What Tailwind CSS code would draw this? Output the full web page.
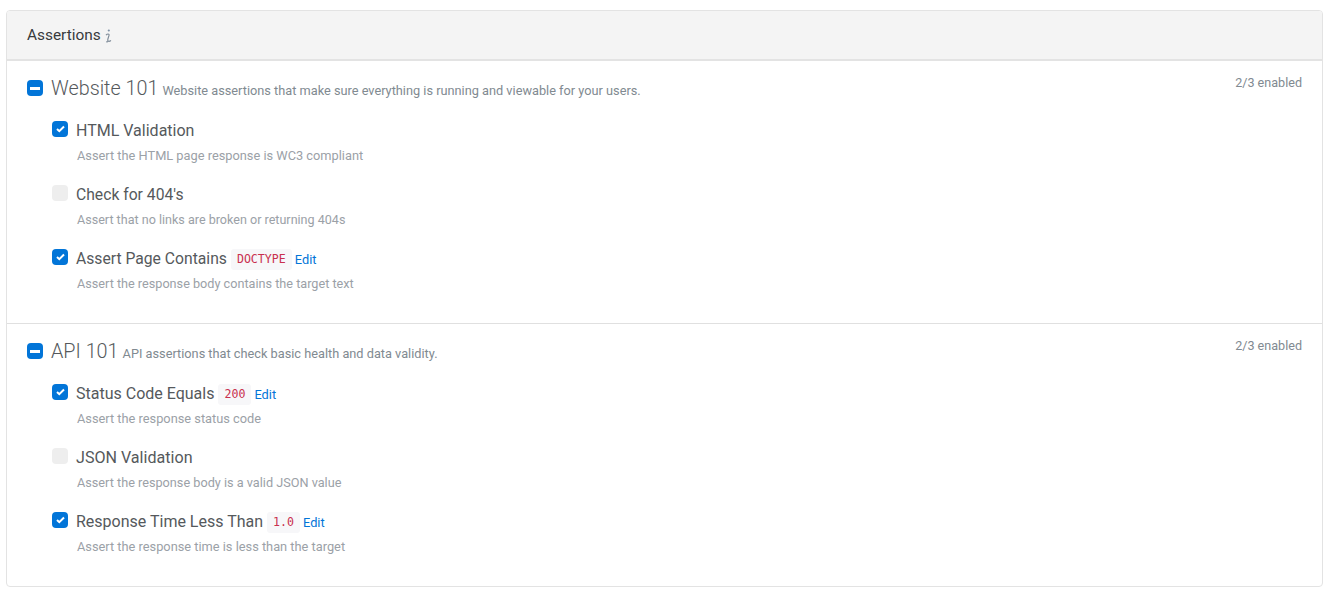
<!DOCTYPE html>
<html lang="en">
<head>
    <meta charset="UTF-8">
    <title>Assertions</title>
    <script src="https://cdn.jsdelivr.net/npm/@tailwindcss/browser@4"></script>
</head>
<body class="bg-white font-['Roboto',sans-serif] text-[#55595c]">
    <div class="pt-[10px] px-[6px] pr-[7px]">
        <div class="border border-[#e3e3e3] rounded-[4px] overflow-hidden h-[577px]">
            <!-- header -->
            <div class="h-[50px] bg-[#f4f4f4] border-b-2 border-[#e3e3e3] pl-[20px] flex items-center text-[15.4px] text-[#373a3c]">
                <span class="mt-[1px]">Assertions</span>
                <svg class="ml-[4px] mt-[1px]" width="7" height="14" viewBox="0 0 7 14"><circle cx="3.8" cy="1.5" r="1.1" fill="#7f93a8"/><path d="M1 6.2 C2.5 4.6 4.4 4.6 4 6.4 L2.8 10.4 C2.4 12.4 3.8 13 6 11.6 M1.2 12.8 L3 12.6" fill="none" stroke="#7f8c99" stroke-width="1.2"/></svg>
            </div>

            <!-- Website 101 -->
            <section class="h-[263px] border-b border-[#e0e0e0] pl-[20px] pr-[20px] relative">
                <div class="flex items-center pt-[14px] h-[40px]">
                    <span class="w-4 h-4 rounded-[4px] bg-[#0275d8] flex items-center justify-center shrink-0"><span class="w-[10px] h-[3px] bg-white"></span></span>
                    <span class="ml-[8px] mt-[1px] text-[19.8px] font-light text-[#55595c]">Website 101</span>
                    <span class="ml-[4px] mt-[5px] text-[12.75px] text-[#818a91]">Website assertions that make sure everything is running and viewable for your users.</span>
                </div>
                <div class="absolute right-[20px] top-[13px] text-[12.6px] text-[#818a91]">2/3 enabled</div>

                <div class="pl-[25px] pt-[19px]">
                    <div class="h-[64px]">
                        <div class="flex items-center h-[22px]">
                            <span class="w-4 h-4 rounded-[4px] bg-[#0275d8] flex items-center justify-center shrink-0 -mt-[4px]">
                                <svg width="9" height="8" viewBox="0 0 9 8"><path d="M1 4 L3.3 6.2 L8 1.5" fill="none" stroke="#fff" stroke-width="2"/></svg>
                            </span>
                            <span class="ml-[8px] text-[16px] leading-[22px]">HTML Validation</span>
                        </div>
                        <p class="ml-[25px] mt-[4px] text-[12.8px] leading-[19px] text-[#9ba1a7]">Assert the HTML page response is WC3 compliant</p>
                    </div>
                    <div class="h-[64px]">
                        <div class="flex items-center h-[22px]">
                            <span class="w-4 h-4 rounded-[4px] bg-[#eeeeee] shrink-0 -mt-[4px]"></span>
                            <span class="ml-[8px] text-[15.7px] leading-[22px]">Check for 404's</span>
                        </div>
                        <p class="ml-[25px] mt-[4px] text-[12.57px] leading-[19px] text-[#9ba1a7]">Assert that no links are broken or returning 404s</p>
                    </div>
                    <div class="h-[64px]">
                        <div class="flex items-center h-[22px]">
                            <span class="w-4 h-4 rounded-[4px] bg-[#0275d8] flex items-center justify-center shrink-0 -mt-[4px]">
                                <svg width="9" height="8" viewBox="0 0 9 8"><path d="M1 4 L3.3 6.2 L8 1.5" fill="none" stroke="#fff" stroke-width="2"/></svg>
                            </span>
                            <span class="ml-[8px] text-[15.7px] leading-[22px]">Assert Page Contains</span>
                            <code class="ml-[4px] mt-[1px] px-[6px] h-[21px] leading-[21px] rounded-[3px] bg-[#f7f7f9] font-['DejaVu_Sans_Mono',monospace] text-[11.6px] text-[#c9304f]">DOCTYPE</code>
                            <a href="#" class="ml-[3px] mt-[1px] text-[12.8px] text-[#0275d8]">Edit</a>
                        </div>
                        <p class="ml-[25px] mt-[4px] text-[12.66px] leading-[19px] text-[#9ba1a7]">Assert the response body contains the target text</p>
                    </div>
                </div>
            </section>

            <!-- API 101 -->
            <section class="h-[262px] pl-[20px] pr-[20px] relative">
                <div class="flex items-center pt-[14px] h-[40px]">
                    <span class="w-4 h-4 rounded-[4px] bg-[#0275d8] flex items-center justify-center shrink-0"><span class="w-[10px] h-[3px] bg-white"></span></span>
                    <span class="ml-[8px] mt-[1px] text-[19.8px] font-light text-[#55595c]">API 101</span>
                    <span class="ml-[4px] mt-[5px] text-[12.75px] text-[#818a91]">API assertions that check basic health and data validity.</span>
                </div>
                <div class="absolute right-[20px] top-[13px] text-[12.6px] text-[#818a91]">2/3 enabled</div>

                <div class="pl-[25px] pt-[19px]">
                    <div class="h-[64px]">
                        <div class="flex items-center h-[22px]">
                            <span class="w-4 h-4 rounded-[4px] bg-[#0275d8] flex items-center justify-center shrink-0 -mt-[4px]">
                                <svg width="9" height="8" viewBox="0 0 9 8"><path d="M1 4 L3.3 6.2 L8 1.5" fill="none" stroke="#fff" stroke-width="2"/></svg>
                            </span>
                            <span class="ml-[8px] text-[16px] leading-[22px]">Status Code Equals</span>
                            <code class="ml-[4px] mt-[1px] px-[6px] h-[21px] leading-[21px] rounded-[3px] bg-[#f7f7f9] font-['DejaVu_Sans_Mono',monospace] text-[11.6px] text-[#c9304f]">200</code>
                            <a href="#" class="ml-[3px] mt-[1px] text-[12.8px] text-[#0275d8]">Edit</a>
                        </div>
                        <p class="ml-[25px] mt-[4px] text-[12.8px] leading-[19px] text-[#9ba1a7]">Assert the response status code</p>
                    </div>
                    <div class="h-[64px]">
                        <div class="flex items-center h-[22px]">
                            <span class="w-4 h-4 rounded-[4px] bg-[#eeeeee] shrink-0 -mt-[4px]"></span>
                            <span class="ml-[8px] text-[16.1px] leading-[22px]">JSON Validation</span>
                        </div>
                        <p class="ml-[25px] mt-[4px] text-[12.7px] leading-[19px] text-[#9ba1a7]">Assert the response body is a valid JSON value</p>
                    </div>
                    <div class="h-[64px]">
                        <div class="flex items-center h-[22px]">
                            <span class="w-4 h-4 rounded-[4px] bg-[#0275d8] flex items-center justify-center shrink-0 -mt-[4px]">
                                <svg width="9" height="8" viewBox="0 0 9 8"><path d="M1 4 L3.3 6.2 L8 1.5" fill="none" stroke="#fff" stroke-width="2"/></svg>
                            </span>
                            <span class="ml-[8px] text-[16px] leading-[22px]">Response Time Less Than</span>
                            <code class="ml-[4px] mt-[1px] px-[6px] h-[21px] leading-[21px] rounded-[3px] bg-[#f7f7f9] font-['DejaVu_Sans_Mono',monospace] text-[11.6px] text-[#c9304f]">1.0</code>
                            <a href="#" class="ml-[3px] mt-[1px] text-[12.8px] text-[#0275d8]">Edit</a>
                        </div>
                        <p class="ml-[25px] mt-[4px] text-[12.8px] leading-[19px] text-[#9ba1a7]">Assert the response time is less than the target</p>
                    </div>
                </div>
            </section>
        </div>
    </div>
</body>
</html>
